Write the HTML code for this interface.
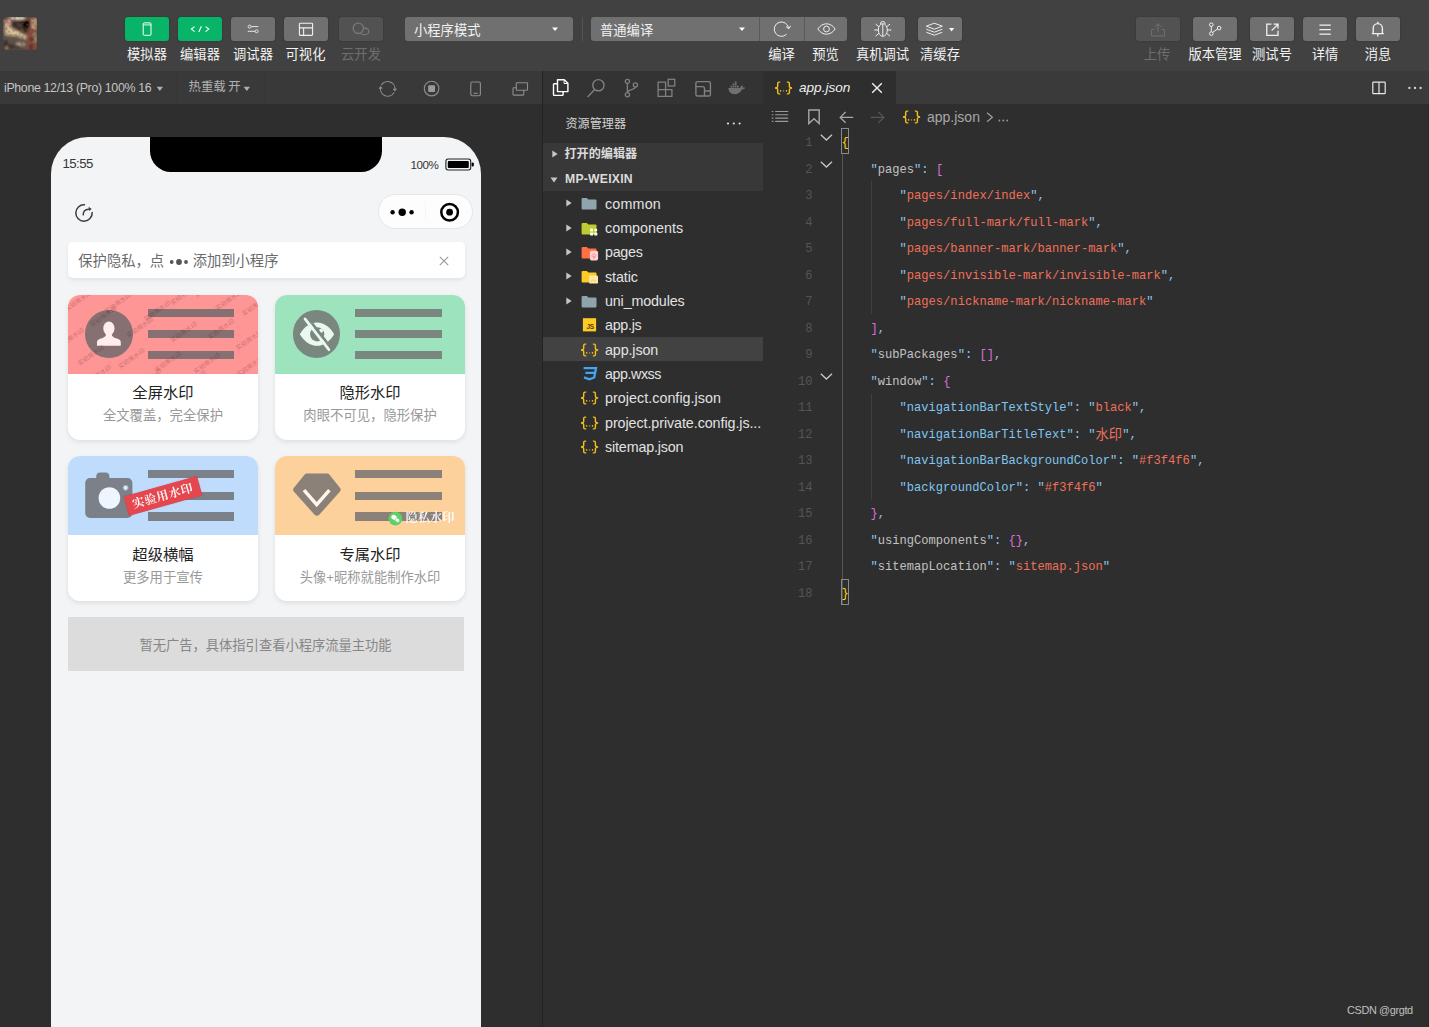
<!DOCTYPE html>
<html lang="zh-CN">
<head>
<meta charset="utf-8">
<title>WeChat DevTools - app.json</title>
<style>
*{box-sizing:border-box;margin:0;padding:0}
html,body{width:1429px;height:1027px;overflow:hidden;background:#2e2e2e}
body{font-family:"Liberation Sans",sans-serif;color:#ccc;position:relative;font-size:13px}
.abs{position:absolute}
.z{display:inline-block;position:relative;vertical-align:top;line-height:1;white-space:nowrap;font-family:"Liberation Sans","Noto Sans CJK SC",sans-serif}
.z.zs{font-family:"Liberation Serif","Noto Serif CJK SC",serif;font-weight:bold}
/* ---------- top toolbar ---------- */
#toolbar{position:absolute;left:0;top:0;width:1429px;height:71px;background:#414141}
.tb{position:absolute;top:17px;height:24px;width:44px;border-radius:3px;background:#707070;box-shadow:0 0 2px rgba(0,0,0,.25)}
.tb.g{background:#07b468}
.tb.d{background:#525252}
.tb svg{position:absolute;left:0;top:0}
.tl{position:absolute;top:47.900px;height:14px;color:#f2f2f2;white-space:nowrap;transform:translateX(-50%)}
.tl.d{color:#6e6e6e}
.sel{position:absolute;top:17px;height:24px;background:#707070;border-radius:3px;color:#f2f2f2}
/* ---------- second bar ---------- */
#simbar{position:absolute;left:0;top:71px;width:542px;height:33px;background:#393939}
#actbar{position:absolute;left:543px;top:71px;width:220px;height:33px;background:#333}
#tabbar{position:absolute;left:763px;top:71px;width:666px;height:33px;background:#3a3a3a}
.jb{font-family:"Liberation Sans",sans-serif;font-size:15.5px;color:#f2c037;letter-spacing:-.2px;white-space:nowrap;line-height:1}
.jb b{font-weight:normal;font-size:9px;letter-spacing:.2px;position:relative;top:0px}

/* ---------- explorer ---------- */
.row{position:absolute;left:0;width:220px;height:24.34px}
.row .nm{position:absolute;left:62px;top:4.2px;font-size:14.3px;color:#e2e2e2;white-space:nowrap;line-height:17px}
.row .tw{position:absolute;left:23px;top:7.900px}
.row .ic{position:absolute;left:38px;top:5.800px;overflow:visible}
.row .jb{position:absolute;left:37px;top:4px}

/* ---------- editor ---------- */
.ln,.cl{position:absolute;height:26.5px;line-height:30.800px;font-family:"Liberation Mono",monospace;font-size:12.1px;white-space:pre}
.ln{left:0;width:49.5px;text-align:right;color:#555}
.cl{left:78.5px;color:#8cc7ee}
.cl .k{color:#c2c2c2}
.cl .n{color:#7fc6f0}
.cl .s{color:#f0705a}
.cl .y{color:#ffd700}
.cl .p{color:#da70d6}
.cl .z{vertical-align:baseline}
.fold{position:absolute;left:57px;width:13px;height:7px}
.guide{position:absolute;width:1px;background:#3f3f3f}

/* ---------- phone ---------- */
#phone{position:absolute;left:51px;top:33px;width:430px;height:900px;background:#f3f4f6;border-radius:37px 37px 0 0;overflow:hidden}
.card{position:absolute;width:190.5px;height:145px;border-radius:12px;background:#fff;box-shadow:0 2px 5px rgba(0,0,0,.09);overflow:hidden}
.card .im{position:absolute;left:0;top:0;width:100%;height:79px;overflow:hidden}
.card .bar{position:absolute;left:79.900px;width:86.900px;height:8.200px}
.card .ti{position:absolute;left:0;width:100%;text-align:center;top:90.8px;color:#222;height:15px}
.card .su{position:absolute;left:0;width:100%;text-align:center;top:114.5px;color:#999;height:13px}
/* ---------- panels ---------- */
#sim{position:absolute;left:0;top:104px;width:542px;height:923px;background:#2e2e2e;overflow:hidden}
#vsep{position:absolute;left:541.800px;top:71px;width:1.300px;height:956px;background:#222}
#explorer{position:absolute;left:543px;top:104px;width:220px;height:923px;background:#2e2e2e}
#editor{position:absolute;left:763px;top:104px;width:666px;height:923px;background:#2e2e2e}
</style>
</head>
<body>
<svg width="0" height="0" style="position:absolute"><defs><g id="jbi" fill="none" stroke="#f5c01e" stroke-width="1.400" stroke-linecap="round"><path d="M5.700 1.100H5Q3.700 1.100 3.700 2.400V5.300Q3.700 6.900 1 7Q3.700 7.100 3.700 8.700V11.600Q3.700 12.900 5 12.900H5.700"/><path d="M13.400 1.100H14.100Q15.400 1.100 15.400 2.400V5.300Q15.400 6.900 18.100 7Q15.400 7.100 15.400 8.700V11.600Q15.400 12.900 14.100 12.900H13.400"/><g fill="#f5c01e" stroke="none"><circle cx="6.600" cy="9.900" r=".8"/><circle cx="9.550" cy="9.900" r=".65" fill-opacity=".8"/><circle cx="12.500" cy="9.900" r=".8"/></g></g></defs></svg>

<!-- ================= TOP TOOLBAR ================= -->
<div id="toolbar">
  <svg id="avatar" class="abs" style="left:3px;top:17px" width="34" height="33" viewBox="0 0 34 33"><defs><clipPath id="avc"><rect width="34" height="33" rx="3"/></clipPath><filter id="avb" x="-10%" y="-10%" width="120%" height="120%"><feGaussianBlur stdDeviation=".9"/></filter><filter id="avn" x="0" y="0" width="100%" height="100%"><feTurbulence type="fractalNoise" baseFrequency=".28" numOctaves="2" seed="7"/><feColorMatrix values="0 0 0 0 .12  0 0 0 0 .08  0 0 0 0 .06  1.600 0 0 0 -.62"/></filter></defs><g clip-path="url(#avc)"><rect width="34" height="33" fill="#554538"/><g filter="url(#avb)"><rect x="0" y="17" width="23" height="16" fill="#5e5148"/><rect x="23.500" y="1" width="10.500" height="32" fill="#8a4b3b"/><rect x="28.500" y="1" width="5.500" height="11" fill="#c39c78"/><rect x="30" y="16" width="4" height="9" fill="#a88a70"/><path d="M1 3h7v8l-3 2H1z" fill="#c7a78a"/><path d="M1 13l6-3l8 4l9 5l-1 3.500l-9-3l-9-1L1 17z" fill="#d8bf98"/><path d="M8 5l12-2v9l-5 2l-6-5z" fill="#3b2b27"/><rect x="20" y="3.500" width="7" height="8" fill="#070505"/><rect x="20.400" y="12.400" width="5" height="2" fill="#1a1210"/><ellipse cx="14" cy="1.200" rx="9" ry="1.600" fill="#f8ecd6"/><ellipse cx="5.400" cy="4" rx="1.500" ry="2.200" fill="#ee7f92"/><ellipse cx="17.500" cy="27.500" rx="4.800" ry="2.600" fill="#ab9a8a"/><rect x="0" y="23" width="4.500" height="10" fill="#2b2623"/><ellipse cx="3.400" cy="31" rx="1.300" ry="1.800" fill="#c8a256"/><rect x="27.500" y="20.500" width="3.500" height="3.500" fill="#2a1a18"/><rect x="26" y="27" width="4" height="6" fill="#5a2f27"/><path d="M5 26l12 3l5 3H6z" fill="#3a322e"/></g><rect width="34" height="33" filter="url(#avn)"/></g></svg>

  <div class="tb g" style="left:125px"><svg width="44" height="24" viewBox="0 0 44 24" fill="none" stroke="#fff" stroke-width="1"><rect x="18.2" y="5.9" width="7.8" height="12.4" rx="1"/><path d="M18.2 7.900H26" stroke-width=".9"/></svg></div>
  <div class="tb g" style="left:178px"><svg width="44" height="24" viewBox="0 0 44 24" fill="none" stroke="#fff" stroke-width="1.1"><path d="M16.6 9.6L13.4 12.1L16.6 14.6M27.6 9.6L30.8 12.1L27.6 14.6M23.4 9.2L20.8 15"/></svg></div>
  <div class="tb" style="left:231px"><svg width="44" height="24" viewBox="0 0 44 24" fill="none" stroke="#e6e6e6" stroke-width="1"><path d="M20.2 9.6H27.4M16.8 14.3H24"/><circle cx="18.6" cy="9.6" r="1.5"/><circle cx="25.6" cy="14.3" r="1.5"/></svg></div>
  <div class="tb" style="left:284px"><svg width="44" height="24" viewBox="0 0 44 24" fill="none" stroke="#f0f0f0" stroke-width="1.1"><rect x="15.4" y="6.2" width="13.2" height="12.2" rx=".8"/><path d="M15.4 10.9H28.6M19.6 10.9V18.4"/></svg></div>
  <div class="tb d" style="left:339px"><svg width="44" height="24" viewBox="0 0 44 24" fill="none" stroke="#787878" stroke-width="1"><ellipse cx="25.300" cy="14.400" rx="4.600" ry="3.400" stroke-width="1.300"/><circle cx="19.300" cy="11.300" r="5.200" fill="#525252" stroke-width="1.300"/></svg></div>
  <div class="tl" style="left:147px"><span class="z" style="width:39.9px;height:13.3px;font-size:13.3px">模拟器</span></div>
  <div class="tl" style="left:200px"><span class="z" style="width:39.9px;height:13.3px;font-size:13.3px">编辑器</span></div>
  <div class="tl" style="left:253px"><span class="z" style="width:39.9px;height:13.3px;font-size:13.3px">调试器</span></div>
  <div class="tl" style="left:305.5px"><span class="z" style="width:39.9px;height:13.3px;font-size:13.3px">可视化</span></div>
  <div class="tl d" style="left:361px"><span class="z" style="width:39.9px;height:13.3px;font-size:13.3px">云开发</span></div>

  <div class="sel" style="left:405px;width:168px"><span class="abs" style="left:9px;top:6.600px"><span class="z" style="width:66.5px;height:13.3px;font-size:13.3px">小程序模式</span></span><svg class="abs" style="left:146px;top:9px" width="8" height="6" viewBox="0 0 8 6"><path d="M1 1.5h6L4 5z" fill="#fff"/></svg></div>
  <div class="abs" style="left:582px;top:17px;width:1px;height:24px;background:#555"></div>
  <div class="sel" style="left:591px;width:256px"><span class="abs" style="left:9px;top:6.600px"><span class="z" style="width:53.2px;height:13.3px;font-size:13.3px">普通编译</span></span><svg class="abs" style="left:147px;top:9px" width="8" height="6" viewBox="0 0 8 6"><path d="M1 1.5h6L4 5z" fill="#fff"/></svg><div class="abs" style="left:168px;top:0;width:1px;height:24px;background:#5a5a5a"></div><div class="abs" style="left:212.5px;top:0;width:1px;height:24px;background:#5a5a5a"></div><svg class="abs" style="left:169px;top:0" width="88" height="24" viewBox="0 0 88 24" fill="none" stroke="#eee" stroke-width="1"><path d="M28.6 11.2A7.2 7.2 0 1 0 26.6 17.2"/><path d="M26 9.6L28.8 11.8L30.6 8.8" /><path d="M57.8 12C60.2 8.4 63.4 6.8 66.5 6.8S72.8 8.4 75.2 12C72.8 15.6 69.6 17.2 66.5 17.2S60.2 15.6 57.8 12Z"/><circle cx="66.5" cy="12" r="2.9"/></svg></div>
  <div class="tl" style="left:781.5px"><span class="z" style="width:26.6px;height:13.3px;font-size:13.3px">编译</span></div>
  <div class="tl" style="left:825.5px"><span class="z" style="width:26.6px;height:13.3px;font-size:13.3px">预览</span></div>

  <div class="tb" style="left:861px"><svg width="44" height="24" viewBox="0 0 44 24" fill="none" stroke="#eee" stroke-width="1"><ellipse cx="21.800" cy="13" rx="4.500" ry="6.300"/><path d="M21.800 6.700V19.300M19.400 6.900a2.400 2.400 0 0 1 4.800 0M17.300 13H13.200M26.300 13H30.400M17.900 9.700L14.600 7.100M25.700 9.700L29 7.100M17.900 16.400L14.600 19.200M25.700 16.400L29 19.200"/></svg></div>
  <div class="tb" style="left:918px"><svg width="44" height="24" viewBox="0 0 44 24" fill="none" stroke="#eee" stroke-width="1"><path d="M16.3 6.2L24.3 9.2L16.3 12.2L8.3 9.2Z" transform="translate(0 0)"/><path d="M8.3 12.2L16.3 15.2L24.3 12.2M8.3 15.2L16.3 18.2L24.3 15.2"/><path d="M31 11l2.6 3.4L36.2 11z" fill="#fff" stroke="none"/></svg></div>
  <div class="tl" style="left:882.5px"><span class="z" style="width:53.2px;height:13.3px;font-size:13.3px">真机调试</span></div>
  <div class="tl" style="left:940px"><span class="z" style="width:39.9px;height:13.3px;font-size:13.3px">清缓存</span></div>

  <div class="tb d" style="left:1135.5px"><svg width="44" height="24" viewBox="0 0 44 24" fill="none" stroke="#707070" stroke-width="1"><path d="M18.4 12.4H15.6V19H28.4V12.4H25.6M22 15.6V7M19 9.8L22 6.6L25 9.8"/></svg></div>
  <div class="tb" style="left:1193px"><svg width="44" height="24" viewBox="0 0 44 24" fill="none" stroke="#f0f0f0" stroke-width="1"><circle cx="18.3" cy="7.7" r="1.8"/><circle cx="18.3" cy="16.6" r="1.8"/><circle cx="26.1" cy="11.1" r="1.8"/><path d="M18.3 9.5V14.8M24.5 12L19.6 15.4"/></svg></div>
  <div class="tb" style="left:1250px"><svg width="44" height="24" viewBox="0 0 44 24" fill="none" stroke="#f0f0f0" stroke-width="1.3"><path d="M21.4 7.2H16.8V18.4H28V13.8M23.6 7.2H28V11.6M28 7.2L21.6 13.6"/></svg></div>
  <div class="tb" style="left:1303px"><svg width="44" height="24" viewBox="0 0 44 24" fill="none" stroke="#f0f0f0" stroke-width="1.4"><path d="M16.4 8.1H27.8M16.4 12.6H27.8M16.4 17.1H27.8"/></svg></div>
  <div class="tb" style="left:1356px"><svg width="44" height="24" viewBox="0 0 44 24" fill="none" stroke="#f0f0f0" stroke-width="1.350"><path d="M17.2 16.4V11.2a4.6 4.6 0 0 1 9.2 0V16.4M15.8 16.6H27.8M21.8 6.6V4.8M21.8 16.8V19.4"/></svg></div>
  <div class="tl d" style="left:1157px"><span class="z" style="width:26.6px;height:13.3px;font-size:13.3px">上传</span></div>
  <div class="tl" style="left:1215px"><span class="z" style="width:53.2px;height:13.3px;font-size:13.3px">版本管理</span></div>
  <div class="tl" style="left:1272px"><span class="z" style="width:39.9px;height:13.3px;font-size:13.3px">测试号</span></div>
  <div class="tl" style="left:1325px"><span class="z" style="width:26.6px;height:13.3px;font-size:13.3px">详情</span></div>
  <div class="tl" style="left:1378px"><span class="z" style="width:26.6px;height:13.3px;font-size:13.3px">消息</span></div>
</div>

<!-- ================= SECOND BAR ================= -->
<div id="simbar">
  <span class="abs" style="left:4px;top:9.5px;font-size:12.4px;color:#c4c4c4;letter-spacing:-.35px;white-space:nowrap">iPhone 12/13 (Pro) 100% 16</span>
  <svg class="abs" style="left:155.5px;top:15px" width="8" height="6" viewBox="0 0 8 6"><path d="M.6 .8h6.4L3.8 5z" fill="#b0b0b0"/></svg>
  <div class="abs" style="left:176px;top:0;width:1px;height:33px;background:#363636"></div>
  <div class="abs" style="left:263.5px;top:0;width:1px;height:33px;background:#363636"></div>
  <span class="abs" style="left:188.600px;top:10.200px;color:#b2b2b2"><span class="z" style="width:37.2px;height:12.4px;font-size:12.4px">热重载</span></span><span class="abs" style="left:228.300px;top:10.200px;color:#b2b2b2"><span class="z" style="width:12.4px;height:12.4px;font-size:12.4px">开</span></span>
  <svg class="abs" style="left:243.400px;top:15px" width="8" height="6" viewBox="0 0 8 6"><path d="M.6 .8h6.4L3.8 5z" fill="#b0b0b0"/></svg>
  <svg class="abs" style="left:378px;top:8px" width="20" height="20" viewBox="0 0 20 20" fill="none" stroke="#8e8e8e" stroke-width="1.100"><path d="M3.380 6.150A7.300 7.300 0 0 1 16.890 11.070M16.020 13.450A7.300 7.300 0 0 1 2.510 8.530"/><path d="M15.200 9.900L16.900 11.700L18.400 9.700M1.200 9.900L2.500 7.900L4.300 9.700"/></svg>
  <svg class="abs" style="left:422px;top:8px" width="20" height="20" viewBox="0 0 20 20" fill="none" stroke="#8e8e8e" stroke-width="1.100"><circle cx="9.600" cy="9.600" r="7.300"/><rect x="6.200" y="6.200" width="6.800" height="6.800" rx="1" fill="#9a9a9a" stroke="none"/></svg>
  <svg class="abs" style="left:466px;top:8px" width="20" height="20" viewBox="0 0 20 20" fill="none" stroke="#8e8e8e" stroke-width="1.100"><rect x="4.800" y="3" width="9.600" height="13.700" rx="1.500"/><path d="M7.500 14.300h4.200"/></svg>
  <svg class="abs" style="left:510px;top:8px" width="20" height="20" viewBox="0 0 20 20" fill="none" stroke="#8e8e8e" stroke-width="1.100"><rect x="6.300" y="3.800" width="11.200" height="7.400" rx=".8"/><path d="M6.300 8.700H3.800a.8 .8 0 0 0-.8 .8v5.800a.8 .8 0 0 0 .8 .8h9.200a.8 .8 0 0 0 .8-.8V11.200"/></svg>
</div>
<div id="actbar">
  <svg class="abs" style="left:7px;top:6px" width="22" height="22" viewBox="0 0 22 22" fill="none" stroke="#fff" stroke-width="1.400" stroke-linejoin="round"><path d="M7.500 2.700h6.800l3.600 3.600v8.300H7.500z"/><path d="M14.100 2.900v3.600h3.600" stroke-width="1"/><path d="M7.300 6.800H4.300a.8 .8 0 0 0-.8 .8V17.600a.8 .8 0 0 0 .8 .8h8a.8 .8 0 0 0 .8-.8V14.800"/></svg>
  <svg class="abs" style="left:42px;top:6px" width="22" height="22" viewBox="0 0 22 22" fill="none" stroke="#808080" stroke-width="1.4"><circle cx="13.4" cy="8.2" r="5.6"/><path d="M9.6 12.6L2.6 20"/></svg>
  <svg class="abs" style="left:77px;top:6px" width="22" height="22" viewBox="0 0 22 22" fill="none" stroke="#808080" stroke-width="1.3"><circle cx="7.4" cy="4.4" r="2.1"/><circle cx="7.4" cy="17.8" r="2.1"/><circle cx="15.4" cy="8" r="2.1"/><path d="M7.4 6.5v9.2M15.4 10.1c0 3-8 2.2-8 5.6"/></svg>
  <svg class="abs" style="left:112px;top:6px" width="22" height="22" viewBox="0 0 22 22" fill="none" stroke="#808080" stroke-width="1.300"><path d="M3.100 5.200h7.500v7.500h6.300v6.700H3.100zM3.100 12.700h7.500M10.600 12.700v6.700"/><rect x="13.200" y="2.300" width="6.500" height="6.700"/></svg>
  <svg class="abs" style="left:148px;top:6px" width="22" height="22" viewBox="0 0 22 22" fill="none" stroke="#808080" stroke-width="1.400"><rect x="4.900" y="4.600" width="14.500" height="14.400" rx="1.600"/><path d="M4.900 9.600H11.500Q13.500 9.600 13.500 11.600V19M13.500 14H19.400"/></svg>
  <svg class="abs" style="left:182.900px;top:10px" width="20.800" height="15.400" viewBox="0 0 26 20" fill="#707070"><path d="M2.6 9.2h15.2c.3-2 1.4-3 2.6-3.800c.9 1 1.1 2.200 .7 3.300c1.100-.5 2.300-.4 3.300 .2c-.7 1.600-2.300 2.300-4.300 2.200c-1.700 4.100-5 6.100-9.700 6.100C5.800 17.200 2.800 14.200 2.600 9.200z"/><path d="M5.400 6.200h2.200v2.200H5.400zM8.200 6.200h2.200v2.200H8.200zM11 6.200h2.200v2.200H11zM13.800 6.200H16v2.200h-2.200zM8.200 3.400h2.200v2.200H8.200zM11 3.400h2.200v2.200H11zM11 .8h2.200V2.800H11z"/></svg>
</div>
<div id="tabbar">
  <div class="abs" style="left:0;top:0;width:133px;height:33px;background:#2e2e2e"></div>
  <svg class="abs" style="left:11px;top:9.600px" width="19.100" height="14" viewBox="0 0 19.100 14"><use href="#jbi"/></svg>
  <span class="abs" style="left:36px;top:9px;font-size:13.6px;font-style:italic;color:#f0f0f0;letter-spacing:0">app.json</span>
  <svg class="abs" style="left:108px;top:11px" width="12" height="12" viewBox="0 0 12 12" stroke="#f0f0f0" stroke-width="1.4" fill="none"><path d="M1.200 1.200l9.600 9.600M10.800 1.200l-9.600 9.600"/></svg>
  <svg class="abs" style="left:608px;top:9px" width="16" height="16" viewBox="0 0 16 16" stroke="#e8e8e8" stroke-width="1.2" fill="none"><rect x="1.800" y="2.200" width="12.400" height="11.400" rx=".6"/><path d="M8 2.200v11.400"/></svg>
  <svg class="abs" style="left:644px;top:14px" width="16" height="6" viewBox="0 0 16 6" fill="#d8d8d8"><circle cx="2.400" cy="3" r="1.150"/><circle cx="8" cy="3" r="1.150"/><circle cx="13.600" cy="3" r="1.150"/></svg>
</div>

<!-- ================= SIMULATOR ================= -->
<div id="sim"><div id="phone">
  <div class="abs" style="left:99px;top:0;width:232px;height:35.3px;background:#000;border-radius:0 0 21px 21px"></div>
  <span class="abs" style="left:11.5px;top:19.500px;font-size:13.2px;color:#383838;letter-spacing:-.55px;line-height:14px">15:55</span>
  <span class="abs" style="left:359.500px;top:21.200px;font-size:11.6px;color:#333;letter-spacing:-.45px;line-height:13px">100%</span>
  <svg class="abs" style="left:393.500px;top:21px" width="30" height="13" viewBox="0 0 30 13"><rect x=".9" y="1" width="24.800" height="11" rx="2.200" fill="none" stroke="#222" stroke-width="1.100"/><rect x="2.800" y="2.900" width="21" height="7.200" rx="1" fill="#000"/><rect x="26.600" y="4.400" width="2.200" height="4.200" rx="1" fill="#000"/></svg>
  <svg class="abs" style="left:22.060px;top:65.080px" width="22" height="22" viewBox="0 0 22 22" fill="none" stroke="#3c3c3c" stroke-width="1.500" stroke-linecap="round"><path d="M11.430 2.810A8.200 8.200 0 1 0 19.190 10.570"/><path d="M10.200 12.900C10.200 9.600 11.400 7.400 15.600 7.200" stroke-width="1.400"/><path d="M15.600 4.700L18.700 6.900L16.100 9.100z" fill="#3c3c3c" stroke="none"/></svg>
  <div class="abs" style="left:327px;top:56.500px;width:95px;height:35px;border-radius:18px;background:#fdfdfd;border:1px solid #e6e6e6"></div>
  <svg class="abs" style="left:327px;top:56.500px" width="95" height="35" viewBox="0 0 95 35"><circle cx="14.600" cy="18.200" r="2.200"/><circle cx="24.200" cy="18.200" r="3.700"/><circle cx="33.600" cy="18.200" r="2.200"/><path d="M47.500 8v19" stroke="#f6f6f6" stroke-width="1"/><circle cx="71.600" cy="18.200" r="8.300" fill="none" stroke="#000" stroke-width="2.500"/><circle cx="71.600" cy="18.200" r="3.400"/></svg>
  <div class="abs" style="left:16.600px;top:105.400px;width:397.600px;height:35.400px;border-radius:5px;background:#fff;box-shadow:0 2px 4px rgba(0,0,0,.07)"></div>
  <span class="abs" style="left:27.300px;top:116.700px;color:#6a6a6a"><span class="z" style="width:85.8px;height:14.3px;font-size:14.3px">保护隐私，点</span></span>
  <svg class="abs" style="left:117.500px;top:120.500px" width="20" height="8" viewBox="0 0 20 8" fill="#555"><circle cx="2.700" cy="4" r="1.900"/><circle cx="10" cy="4" r="2.900"/><circle cx="17" cy="4" r="1.900"/></svg>
  <span class="abs" style="left:141.700px;top:116.700px;color:#6a6a6a"><span class="z" style="width:85.8px;height:14.3px;font-size:14.3px">添加到小程序</span></span>
  <svg class="abs" style="left:387.600px;top:118.600px" width="10" height="10" viewBox="0 0 10 10" stroke="#9a9a9a" stroke-width="1.150" fill="none"><path d="M.8 .8l8.400 8.400M9.200 .8L.8 9.200"/></svg>
  <div class="card" style="left:16.700px;top:157.700px"><div class="im" style="background:#ff9696"><div class="abs" style="left:17.100px;top:14.900px;width:48px;height:48px;border-radius:50%;background:#867071"></div><svg class="abs" style="left:17.100px;top:14.900px" width="48" height="48" viewBox="0 0 48 48" fill="#ffecec"><ellipse cx="23.900" cy="18.400" rx="5.600" ry="6.800"/><path d="M21 24h5.800c.2 2.600 1.400 3.400 5.200 4.600c2.600.8 3.800 2 3.800 3.800v3.400H12v-3.400c0-1.800 1.200-3 3.800-3.800c3.800-1.200 5-2 5.200-4.600z"/></svg><div class="bar" style="top:14.3px;background:#867071"></div><div class="bar" style="top:35.500px;background:#867071"></div><div class="bar" style="top:56.400px;background:#867071"></div><svg class="abs" style="left:0;top:0" width="191" height="79" viewBox="0 0 191 79"><defs><g id="wm"><text transform="rotate(-35)" x="-15.500" y="2.200" font-size="6.200" fill="#40080e" fill-opacity=".3" font-family="'Liberation Sans','Noto Sans CJK SC',sans-serif">实验用水印</text></g></defs><use href="#wm" x="10.4" y="5.900"/><use href="#wm" x="35.500" y="21.500"/><use href="#wm" x="72" y="32.400"/><use href="#wm" x="89.100" y="16"/><use href="#wm" x="115.600" y="-0.3"/><use href="#wm" x="160.800" y="5.100"/><use href="#wm" x="187.300" y="10.600"/><use href="#wm" x="115.600" y="37.100"/><use href="#wm" x="153" y="34"/><use href="#wm" x="181" y="44.900"/><use href="#wm" x="2.600" y="43.300"/><use href="#wm" x="22.900" y="60.400"/><use href="#wm" x="63.400" y="63.600"/><use href="#wm" x="100" y="66.700"/><use href="#wm" x="139" y="68.200"/><use href="#wm" x="181.800" y="71.400"/><use href="#wm" x="50" y="8"/><use href="#wm" x="140" y="-8"/><use href="#wm" x="30" y="80"/><use href="#wm" x="80" y="84"/><use href="#wm" x="125" y="86"/><use href="#wm" x="165" y="88"/></svg></div><div class="ti"><span class="z" style="width:61.2px;height:15.3px;font-size:15.3px">全屏水印</span></div><div class="su"><span class="z" style="width:120.15px;height:13.35px;font-size:13.35px">全文覆盖，完全保护</span></div></div>
  <div class="card" style="left:223.800px;top:157.700px"><div class="im" style="background:#9de3bd"><div class="abs" style="left:18.300px;top:15.500px;width:47.400px;height:47.400px;border-radius:50%;background:#79877f"></div><svg class="abs" style="left:18px;top:15.200px" width="48" height="48" viewBox="0 0 48 48"><defs><clipPath id="eyec"><path id="eyep" d="M6.800 24.200C11.500 16.500 17.500 12.600 24 12.600S36.500 16.500 41.200 24.200C36.500 31.900 30.500 35.800 24 35.800S11.500 31.900 6.800 24.200z"/></clipPath></defs><use href="#eyep" fill="#e9f8f0"/><circle cx="24.200" cy="24.300" r="7.100" fill="#79877f"/><circle cx="28.100" cy="20.800" r="2" fill="#e9f8f0"/><path d="M14.200 7.200L38.100 38" stroke="#79877f" stroke-width="2.700" clip-path="url(#eyec)"/><path d="M12 8.900L35.900 39.700" stroke="#e9f8f0" stroke-width="2.700" stroke-linecap="round"/></svg><div class="bar" style="top:14.3px;background:#79877f"></div><div class="bar" style="top:35.500px;background:#79877f"></div><div class="bar" style="top:56.400px;background:#79877f"></div></div><div class="ti"><span class="z" style="width:61.2px;height:15.3px;font-size:15.3px">隐形水印</span></div><div class="su"><span class="z" style="width:133.5px;height:13.35px;font-size:13.35px">肉眼不可见，隐形保护</span></div></div>
  <div class="card" style="left:16.700px;top:319px"><div class="im" style="background:#bfdcfd"><svg class="abs" style="left:16px;top:14px" width="52" height="50" viewBox="0 0 52 50"><path d="M12.200 8V6.400a4 4 0 0 1 4-4h5.200a4 4 0 0 1 4 4V8h18.200a4.800 4.800 0 0 1 4.800 4.800v30.400a4.800 4.800 0 0 1-4.800 4.800H6a4.800 4.800 0 0 1-4.800-4.800V12.800A4.800 4.800 0 0 1 6 8z" fill="#7c8189"/><circle cx="25.400" cy="28" r="10.800" fill="#eef5ff"/><circle cx="41.600" cy="17.800" r="2.700" fill="#dbe8fb" stroke="#8d939c" stroke-width="1"/></svg><div class="bar" style="top:14.3px;background:#7c8189"></div><div class="bar" style="top:35.500px;background:#7c8189"></div><div class="bar" style="top:56.400px;background:#7c8189"></div><div class="abs" style="left:57.400px;top:29.800px;width:75.500px;height:19.800px;background:#e4474d;transform:rotate(-15.600deg);box-shadow:0 0 1px rgba(160,30,30,.5)"><span class="abs" style="left:6.400px;top:3.700px;color:#fff;opacity:.93"><span class="z zs" style="width:62.16px;height:12px;font-size:12px;letter-spacing:.54px">实验用水印</span></span></div></div><div class="ti"><span class="z" style="width:61.2px;height:15.3px;font-size:15.3px">超级横幅</span></div><div class="su"><span class="z" style="width:80.1px;height:13.35px;font-size:13.35px">更多用于宣传</span></div></div>
  <div class="card" style="left:223.800px;top:319px"><div class="im" style="background:#fdd19b"><svg class="abs" style="left:16px;top:14px" width="52" height="50" viewBox="0 0 52 50"><path d="M15.800 3.600h20.400a3 3 0 0 1 2.300 1.100l10.400 13a3.200 3.200 0 0 1-.100 4.100L28.200 44.800a3 3 0 0 1-4.600 0L3 21.800a3.200 3.200 0 0 1-.100-4.100L13.500 4.700a3 3 0 0 1 2.300-1.100z" fill="#8b8178"/><path d="M13 20.200L25.700 34.600L38.400 20.200" fill="none" stroke="#fff6ea" stroke-width="3.500"/></svg><div class="bar" style="top:14.3px;background:#8b8178"></div><div class="bar" style="top:35.500px;background:#8b8178"></div><div class="bar" style="top:56.400px;background:#8b8178"></div><svg class="abs" style="left:113px;top:54.600px" width="16" height="16" viewBox="0 0 16 16"><circle cx="7.400" cy="7.600" r="6.900" fill="#5fcf67"/><ellipse cx="6.100" cy="6.400" rx="2.900" ry="2.400" fill="#fff" transform="rotate(35 6.100 6.400)"/><ellipse cx="9.300" cy="9.200" rx="2.500" ry="2" fill="#fff" stroke="#5fcf67" stroke-width=".6" transform="rotate(35 9.300 9.200)"/></svg><span class="abs" style="left:130.800px;top:55.600px;color:#fff;opacity:.9"><span class="z zs" style="width:48.8px;height:12.2px;font-size:12.2px">隐私水印</span></span></div><div class="ti"><span class="z" style="width:61.2px;height:15.3px;font-size:15.3px">专属水印</span></div><div class="su"><span class="z" style="width:143.31px;height:13.3px;font-size:13.3px">头像+昵称就能制作水印</span></div></div>
  <div class="abs" style="left:16.900px;top:480px;width:396.600px;height:54.400px;background:#dcdcdc"></div>
  <span class="abs" style="left:88.500px;top:502px;color:#868686"><span class="z" style="width:252.13px;height:13.27px;font-size:13.27px">暂无广告，具体指引查看小程序流量主功能</span></span>
</div></div>

<!-- ================= EXPLORER ================= -->
<div id="explorer">
  <span class="abs" style="left:22.5px;top:13.500px;color:#d4d4d4"><span class="z" style="width:60.5px;height:12.1px;font-size:12.1px">资源管理器</span></span>
  <svg class="abs" style="left:183px;top:17px" width="16" height="5" viewBox="0 0 16 5" fill="#e0e0e0"><circle cx="2" cy="2.500" r="1.100"/><circle cx="7.800" cy="2.500" r="1.100"/><circle cx="13.600" cy="2.500" r="1.100"/></svg>
  <div class="abs" style="left:0;top:39px;width:220px;height:48.400px;background:#383838"></div>
  <svg class="abs" style="left:9px;top:46.200px" width="6" height="8" viewBox="0 0 6 8"><path d="M.3 .5L5.700 4L.3 7.500z" fill="#c6c6c6"/></svg>
  <span class="abs" style="left:21.500px;top:44.400px;color:#dcdcdc"><span class="z" style="width:72.6px;height:12.1px;font-size:12.1px;font-weight:bold">打开的编辑器</span></span>
  <svg class="abs" style="left:6.600px;top:72.500px" width="8" height="6" viewBox="0 0 8 6"><path d="M.5 .4h7L4 5.600z" fill="#c6c6c6"/></svg>
  <span class="abs" style="left:22px;top:68px;font-size:12.2px;font-weight:bold;color:#dcdcdc;letter-spacing:.25px;line-height:15px">MP-WEIXIN</span>
  <div class="row" style="top:87.40px"><svg class="tw" width="6" height="8" viewBox="0 0 6 8"><path d="M.3 .5L5.700 4L.3 7.500z" fill="#c6c6c6"/></svg><svg class="ic" width="17" height="14" viewBox="0 0 17 14"><path d="M.6 1.900a1 1 0 0 1 1-1h4.200l1.700 1.700h7a1 1 0 0 1 1 1v7.800a1 1 0 0 1-1 1H1.600a1 1 0 0 1-1-1z" fill="#90a4ae"/></svg><span class="nm" style="letter-spacing:0.2px">common</span></div>
  <div class="row" style="top:111.74px"><svg class="tw" width="6" height="8" viewBox="0 0 6 8"><path d="M.3 .5L5.700 4L.3 7.500z" fill="#c6c6c6"/></svg><svg class="ic" width="17" height="14" viewBox="0 0 17 14"><path d="M.6 1.900a1 1 0 0 1 1-1h4.200l1.700 1.700h7a1 1 0 0 1 1 1v7.800a1 1 0 0 1-1 1H1.600a1 1 0 0 1-1-1z" fill="#c0ca33"/><g fill="#fdfde8" transform="translate(.9 1)"><rect x="8.200" y="5.400" width="3" height="3" rx=".6"/><rect x="12.400" y="5.400" width="3" height="3" rx="1.500"/><rect x="8.200" y="9.600" width="3" height="3" rx=".6"/><rect x="12.400" y="9.600" width="3" height="3" rx=".6"/></g></svg><span class="nm" style="letter-spacing:0.03px">components</span></div>
  <div class="row" style="top:136.08px"><svg class="tw" width="6" height="8" viewBox="0 0 6 8"><path d="M.3 .5L5.700 4L.3 7.500z" fill="#c6c6c6"/></svg><svg class="ic" width="17" height="14" viewBox="0 0 17 14"><path d="M.6 1.900a1 1 0 0 1 1-1h4.200l1.700 1.700h7a1 1 0 0 1 1 1v7.800a1 1 0 0 1-1 1H1.600a1 1 0 0 1-1-1z" fill="#ff7043"/><g transform="translate(.9 .8)"><rect x="8" y="4" width="8.200" height="9.600" rx="1.600" fill="#ffd0d4"/><path d="M10.200 8.800l1.900-2l1.900 2l-1.900 2zM12.100 9.200v2.800" stroke="#fb8a8a" stroke-width="1" fill="none"/></g></svg><span class="nm" style="letter-spacing:-0.27px">pages</span></div>
  <div class="row" style="top:160.42px"><svg class="tw" width="6" height="8" viewBox="0 0 6 8"><path d="M.3 .5L5.700 4L.3 7.500z" fill="#c6c6c6"/></svg><svg class="ic" width="17" height="14" viewBox="0 0 17 14"><path d="M.6 1.900a1 1 0 0 1 1-1h4.200l1.700 1.700h7a1 1 0 0 1 1 1v7.800a1 1 0 0 1-1 1H1.600a1 1 0 0 1-1-1z" fill="#ffca28"/><rect x="8.200" y="5.400" width="8.800" height="8.200" rx="1.200" fill="#ffe9a6"/><path d="M9.400 12.200l2.400-2.600l2 1.800l1.800-1.400" stroke="#f7cf52" stroke-width="1" fill="none"/></svg><span class="nm" style="letter-spacing:-0.08px">static</span></div>
  <div class="row" style="top:184.76px"><svg class="tw" width="6" height="8" viewBox="0 0 6 8"><path d="M.3 .5L5.700 4L.3 7.500z" fill="#c6c6c6"/></svg><svg class="ic" width="17" height="14" viewBox="0 0 17 14"><path d="M.6 1.900a1 1 0 0 1 1-1h4.200l1.700 1.700h7a1 1 0 0 1 1 1v7.800a1 1 0 0 1-1 1H1.600a1 1 0 0 1-1-1z" fill="#90a4ae"/></svg><span class="nm" style="letter-spacing:-0.14px">uni_modules</span></div>
  <div class="row" style="top:209.10px"><svg class="ic" width="17" height="14" viewBox="0 0 17 14" style="top:4.500px"><rect x="1.900" y=".2" width="13.200" height="13.200" fill="#ffca28"/><text x="5.400" y="11.400" font-family="Liberation Sans,sans-serif" font-weight="bold" font-size="6.400" fill="#4a3b00" letter-spacing="-.3">JS</text></svg><span class="nm" style="letter-spacing:-0.28px">app.js</span></div>
  <div class="row" style="top:233.44px;background:#424242;height:23.800px"><svg class="abs" style="left:37.300px;top:5.200px" width="19.100" height="14" viewBox="0 0 19.100 14"><use href="#jbi"/></svg><span class="nm" style="letter-spacing:-0.12px">app.json</span></div>
  <div class="row" style="top:257.78px"><svg class="ic" width="17" height="15" viewBox="0 0 17 15" style="top:4.300px" fill="none" stroke="#42a5f5" stroke-width="2.300"><path d="M2.600 2.200H15L14.100 6.900H4.400M14.100 6.900L13.200 11.500L8.400 13.300L3 11.300"/></svg><span class="nm" style="letter-spacing:-0.45px">app.wxss</span></div>
  <div class="row" style="top:282.12px"><svg class="abs" style="left:37.300px;top:5.200px" width="19.100" height="14" viewBox="0 0 19.100 14"><use href="#jbi"/></svg><span class="nm" style="letter-spacing:0.04px">project.config.json</span></div>
  <div class="row" style="top:306.46px"><svg class="abs" style="left:37.300px;top:5.200px" width="19.100" height="14" viewBox="0 0 19.100 14"><use href="#jbi"/></svg><span class="nm" style="letter-spacing:-0.07px">project.private.config.js...</span></div>
  <div class="row" style="top:330.80px"><svg class="abs" style="left:37.300px;top:5.200px" width="19.100" height="14" viewBox="0 0 19.100 14"><use href="#jbi"/></svg><span class="nm" style="letter-spacing:-0.155px">sitemap.json</span></div>
</div>

<!-- ================= EDITOR ================= -->
<div id="editor">
  <svg class="abs" style="left:8px;top:6px" width="18" height="13" viewBox="0 0 18 13" fill="none" stroke="#9a9a9a" stroke-width="1.100"><path d="M4.200 1.500h13M4.200 4.800h13M4.200 8.100h13M4.200 11.400h13" /><path d="M.8 1.500h1.600M.8 4.800h1.600M.8 8.100h1.600M.8 11.400h1.600"/></svg>
  <svg class="abs" style="left:43.500px;top:4.500px" width="14" height="16" viewBox="0 0 14 16" fill="none" stroke="#a8a8a8" stroke-width="1.400"><path d="M1.800 1h10.400v13.600L7 9.800L1.800 14.600z"/></svg>
  <svg class="abs" style="left:76px;top:6.500px" width="15" height="13" viewBox="0 0 15 13" fill="none" stroke="#a8a8a8" stroke-width="1.300"><path d="M14.200 6.400H1.200M6.600 1L1.200 6.400L6.600 11.800"/></svg>
  <svg class="abs" style="left:107px;top:6.500px" width="15" height="13" viewBox="0 0 15 13" fill="none" stroke="#555" stroke-width="1.300"><path d="M.8 6.400H13.800M8.400 1L13.800 6.400L8.400 11.800"/></svg>
  <svg class="abs" style="left:139.400px;top:5.800px" width="19.100" height="14" viewBox="0 0 19.100 14"><use href="#jbi"/></svg>
  <span class="abs" style="left:164px;top:4.500px;font-size:14px;color:#a8a8a8;line-height:17px">app.json</span>
  <svg class="abs" style="left:223px;top:8px" width="8" height="11" viewBox="0 0 8 11" fill="none" stroke="#a0a0a0" stroke-width="1.200"><path d="M1 .8L6.400 5.300L1 9.800"/></svg>
  <svg class="abs" style="left:235px;top:15px" width="11" height="3" viewBox="0 0 11 3" fill="#9a9a9a"><circle cx="1.400" cy="1.500" r=".9"/><circle cx="5.300" cy="1.500" r=".9"/><circle cx="9.200" cy="1.500" r=".9"/></svg>
  <div class="guide" style="left:78.5px;top:50px;height:451px;background:#545454"></div>
  <div class="guide" style="left:107.5px;top:77px;height:133px"></div>
  <div class="guide" style="left:107.5px;top:289.500px;height:106px"></div>
  <div class="abs" style="left:78px;top:24.200px;width:7.800px;height:26.300px;border:1px solid #8a8a8a"></div>
  <div class="abs" style="left:78px;top:474.700px;width:7.800px;height:26.300px;border:1px solid #8a8a8a"></div>
  <div class="ln" style="top:24.25px">1</div><div class="cl" style="top:24.25px"><span class="y">{</span></div>
  <div class="ln" style="top:50.75px">2</div><div class="cl" style="top:50.75px">    "<span class="k">pages</span>": <span class="p">[</span></div>
  <div class="ln" style="top:77.25px">3</div><div class="cl" style="top:77.25px">        "<span class="s">pages/index/index</span>",</div>
  <div class="ln" style="top:103.75px">4</div><div class="cl" style="top:103.75px">        "<span class="s">pages/full-mark/full-mark</span>",</div>
  <div class="ln" style="top:130.25px">5</div><div class="cl" style="top:130.25px">        "<span class="s">pages/banner-mark/banner-mark</span>",</div>
  <div class="ln" style="top:156.75px">6</div><div class="cl" style="top:156.75px">        "<span class="s">pages/invisible-mark/invisible-mark</span>",</div>
  <div class="ln" style="top:183.25px">7</div><div class="cl" style="top:183.25px">        "<span class="s">pages/nickname-mark/nickname-mark</span>"</div>
  <div class="ln" style="top:209.75px">8</div><div class="cl" style="top:209.75px">    <span class="p">]</span>,</div>
  <div class="ln" style="top:236.25px">9</div><div class="cl" style="top:236.25px">    "<span class="k">subPackages</span>": <span class="p">[]</span>,</div>
  <div class="ln" style="top:262.75px">10</div><div class="cl" style="top:262.75px">    "<span class="k">window</span>": <span class="p">{</span></div>
  <div class="ln" style="top:289.25px">11</div><div class="cl" style="top:289.25px">        "<span class="n">navigationBarTextStyle</span>": "<span class="s">black</span>",</div>
  <div class="ln" style="top:315.75px">12</div><div class="cl" style="top:315.75px">        "<span class="n">navigationBarTitleText</span>": "<span class="s" style="display:inline-block;width:26.6px;height:12px;position:relative;top:1.5px"><span class="z" style="width:26.6px;height:13.3px;font-size:13.3px">水印</span></span>",</div>
  <div class="ln" style="top:342.25px">13</div><div class="cl" style="top:342.25px">        "<span class="n">navigationBarBackgroundColor</span>": "<span class="s">#f3f4f6</span>",</div>
  <div class="ln" style="top:368.75px">14</div><div class="cl" style="top:368.75px">        "<span class="n">backgroundColor</span>": "<span class="s">#f3f4f6</span>"</div>
  <div class="ln" style="top:395.25px">15</div><div class="cl" style="top:395.25px">    <span class="p">}</span>,</div>
  <div class="ln" style="top:421.75px">16</div><div class="cl" style="top:421.75px">    "<span class="k">usingComponents</span>": <span class="p">{}</span>,</div>
  <div class="ln" style="top:448.25px">17</div><div class="cl" style="top:448.25px">    "<span class="k">sitemapLocation</span>": "<span class="s">sitemap.json</span>"</div>
  <div class="ln" style="top:474.75px">18</div><div class="cl" style="top:474.75px"><span class="y">}</span></div>
  <svg class="fold" style="top:30.20px" viewBox="0 0 13 7" fill="none" stroke="#c8c8c8" stroke-width="1.3"><path d="M.8 .8L6.400 6L12 .8"/></svg>
  <svg class="fold" style="top:56.70px" viewBox="0 0 13 7" fill="none" stroke="#c8c8c8" stroke-width="1.3"><path d="M.8 .8L6.400 6L12 .8"/></svg>
  <svg class="fold" style="top:268.70px" viewBox="0 0 13 7" fill="none" stroke="#c8c8c8" stroke-width="1.3"><path d="M.8 .8L6.400 6L12 .8"/></svg>
  <span class="abs" style="left:584px;top:899.500px;font-size:10.900px;color:#c0c0c0;letter-spacing:-.36px;white-space:nowrap">CSDN @grgtd</span>
  <div class="abs" style="left:664.500px;top:0;width:1.500px;height:923px;background:#262626"></div>
</div>

<div id="vsep"></div>
</body>
</html>
